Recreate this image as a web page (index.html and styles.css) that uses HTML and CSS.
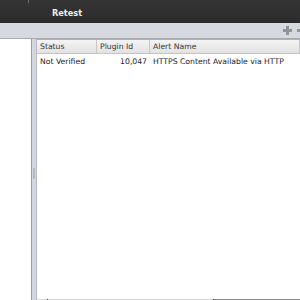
FILE: index.html
```html
<!DOCTYPE html>
<html lang="en">
<head>
  <meta charset="UTF-8" />
  <title>Alerts</title>
  <link rel="stylesheet" href="styles.css">
</head>
<body>
  <!-- top bar -->
  <header class="topbar">
    <span class="topbar-sep"></span>
    <button class="retest-btn" type="button">Retest</button>
  </header>

  <!-- toolbar -->
  <div class="toolbar">
    <svg class="tool-icon" width="9" height="9" viewBox="0 0 9 9"><path d="M3 0h3v3h3v3H6v3H3V6H0V3h3z" fill="#939393"/></svg>
    <svg class="tool-icon tool-cut" width="9" height="9" viewBox="0 0 9 9"><path d="M0 3h9v3H0z" fill="#939393"/></svg>
  </div>

  <main class="main">
    <div class="left-pane"></div>
    <div class="splitter"><span class="grip"></span></div>
    <section class="table-pane">
      <div class="row head">
        <div class="cell">Status</div>
        <div class="cell">Plugin Id</div>
        <div class="cell">Alert Name</div>
      </div>
      <div class="row">
        <div class="cell">Not Verified</div>
        <div class="cell num">10,047</div>
        <div class="cell">HTTPS Content Available via HTTP</div>
      </div>
      <div class="filler"></div>
      <div class="scroll-edge">
        <span class="seg a"></span><span class="mark"></span><span class="seg b"></span><span class="mark"></span><span class="seg c"></span>
      </div>
    </section>
  </main>
</body>
</html>
```

FILE: styles.css
```css
/* --- base ------------------------------------------------------------ */
* { box-sizing: border-box; margin: 0; padding: 0; }
html, body { width: 300px; height: 300px; overflow: hidden; }
body {
  font-family: "DejaVu Sans", Verdana, sans-serif;
  font-size: 7.7px;
  color: #1a1a2a;
  background: #fff;
  display: flex;
  flex-direction: column;
}

/* --- top bar --------------------------------------------------------- */
.topbar {
  height: 23px;
  background: linear-gradient(#353535, #2c2c2c);
  display: flex;
  align-items: center;
  position: relative;
}
.topbar-sep { position: absolute; left: 28px; top: 0; width: 1px; height: 3px; background: #6a6a6a; }
.retest-btn {
  margin-left: 52px;
  background: none; border: none;
  color: #ececec;
  font: bold 8.2px "DejaVu Sans", Verdana, sans-serif;
  margin-top: 2px;
}

/* --- toolbar --------------------------------------------------------- */
.toolbar {
  height: 16px;
  background: #d6d9e0;
  border-bottom: 1px solid #a9abb3;
  display: flex;
  justify-content: flex-end;
  align-items: center;
  gap: 5px;
  overflow: hidden;
}
.tool-icon { flex: none; }
.tool-cut { margin-right: -6px; }

/* --- main ------------------------------------------------------------ */
.main { flex: 1; display: flex; min-height: 0; }
.left-pane { width: 31px; background: #fff; }
.splitter {
  width: 6px;
  background: #d3d6de;
  border-left: 1px solid #9c9cab;
  border-right: 1px solid #b8bac4;
  position: relative;
}
.grip { position: absolute; left: 1px; top: 129px; width: 2px; height: 11px; background: #b6b8c2; border-radius: 1px; }

.table-pane { flex: 1; display: flex; flex-direction: column; background: #fff; }
.row { display: grid; grid-template-columns: 60px 53px 1fr; height: 14px; align-items: center; }
.row .cell { padding: 0 3px; white-space: nowrap; overflow: hidden; }
.row .num { text-align: right; }
.head {
  height: 15px;
  background: linear-gradient(#f4f4f4, #e2e2e2);
  border-top: 1px solid #b0b0b8;
  border-bottom: 1px solid #c4c4c8;
}
.head .cell { height: 100%; display: flex; align-items: center; border-right: 1px solid #c8c8cc; color: #333; }
.filler { flex: 1; }
.scroll-edge { height: 1px; display: flex; }
.scroll-edge .mark { width: 1px; background: #444; }
.scroll-edge .a { width: 10px; background: #dadada; }
.scroll-edge .b { width: 165px; background: #d6d6d6; }
.scroll-edge .c { flex: 1; background: #8a8a8a; }
```
